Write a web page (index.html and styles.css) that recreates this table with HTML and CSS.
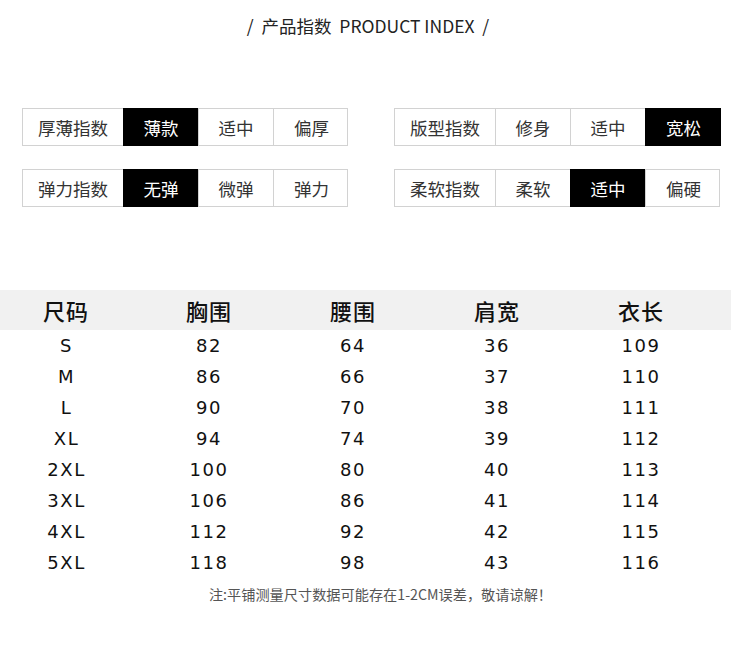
FILE: index.html
```html
<!DOCTYPE html>
<html lang="zh">
<head>
<meta charset="utf-8">
<link rel="stylesheet" href="styles.css">
</head>
<body>
<div class="page">
  <h1 class="title">/&nbsp; 产品指数&nbsp; PRODUCT INDEX&nbsp; /</h1>

  <div class="indices">
    <div class="idx">
      <div class="cell label">厚薄指数</div>
      <div class="cell on">薄款</div>
      <div class="cell">适中</div>
      <div class="cell">偏厚</div>
    </div>
    <div class="idx">
      <div class="cell label">版型指数</div>
      <div class="cell">修身</div>
      <div class="cell">适中</div>
      <div class="cell on">宽松</div>
    </div>
    <div class="idx">
      <div class="cell label">弹力指数</div>
      <div class="cell on">无弹</div>
      <div class="cell">微弹</div>
      <div class="cell">弹力</div>
    </div>
    <div class="idx">
      <div class="cell label">柔软指数</div>
      <div class="cell">柔软</div>
      <div class="cell on">适中</div>
      <div class="cell">偏硬</div>
    </div>
  </div>

  <div class="sizes">
    <div class="row head"><span>尺码</span><span>胸围</span><span>腰围</span><span>肩宽</span><span>衣长</span></div>
    <div class="row"><span>S</span><span>82</span><span>64</span><span>36</span><span>109</span></div>
    <div class="row"><span>M</span><span>86</span><span>66</span><span>37</span><span>110</span></div>
    <div class="row"><span>L</span><span>90</span><span>70</span><span>38</span><span>111</span></div>
    <div class="row"><span>XL</span><span>94</span><span>74</span><span>39</span><span>112</span></div>
    <div class="row"><span>2XL</span><span>100</span><span>80</span><span>40</span><span>113</span></div>
    <div class="row"><span>3XL</span><span>106</span><span>86</span><span>41</span><span>114</span></div>
    <div class="row"><span>4XL</span><span>112</span><span>92</span><span>42</span><span>115</span></div>
    <div class="row"><span>5XL</span><span>118</span><span>98</span><span>43</span><span>116</span></div>
  </div>

  <p class="note">注:平铺测量尺寸数据可能存在1-2CM误差，敬请谅解！</p>
</div>
</body>
</html>
```

FILE: styles.css
```css
html, body {
  margin: 0;
  padding: 0;
  background: #fff;
}

.page {
  width: 744px;
  font-family: "Noto Sans CJK SC", "Noto Sans", sans-serif;
  color: #222;
}

.title {
  margin: 0;
  padding-top: 13px;
  height: 30px;
  line-height: 26px;
  text-align: center;
  font-size: 17.5px;
  font-weight: 400;
  color: #222;
  padding-right: 8px;
}

.indices {
  margin-top: 65px;
  padding-left: 22px;
  display: grid;
  grid-template-columns: 326px 326px;
  column-gap: 46px;
  row-gap: 23px;
}

.idx {
  display: grid;
  grid-template-columns: 100px 75px 75px 76px;
  height: 38px;
  border: 1px solid #d2d2d2;
  box-sizing: border-box;
}

.cell {
  display: flex;
  align-items: center;
  justify-content: center;
  font-size: 17.5px;
  color: #333;
  border-left: 1px solid #d2d2d2;
}

.cell.label {
  border-left: none;
}

.cell.on {
  background: #000;
  color: #fff;
  border-left-color: #000;
  margin: -1px 0;
}

.sizes {
  margin-top: 83px;
  width: 731px;
}

.row {
  display: grid;
  grid-template-columns: 136px 144px 144px 144px 163px;
  height: 31px;
  align-items: center;
  font-family: "DejaVu Sans", sans-serif;
  font-size: 18px;
  letter-spacing: 1.5px;
  color: #111;
}

.row span {
  text-align: center;
  padding-left: 2px;
}

.row span:first-child {
  padding-left: 0;
  padding-right: 3px;
}

.row span:last-child {
  padding-right: 19px;
}

.row.head {
  height: 40px;
  background: #f1f1f1;
  font-family: "Noto Sans CJK SC", sans-serif;
  font-size: 22px;
  font-weight: 500;
  letter-spacing: 1px;
  color: #111;
}

.row.head span:first-child {
  padding-right: 4px;
}

.note {
  margin: 0;
  height: 32px;
  line-height: 32px;
  text-align: center;
  font-size: 14.2px;
  color: #555;
  padding-left: 17px;
}
```
